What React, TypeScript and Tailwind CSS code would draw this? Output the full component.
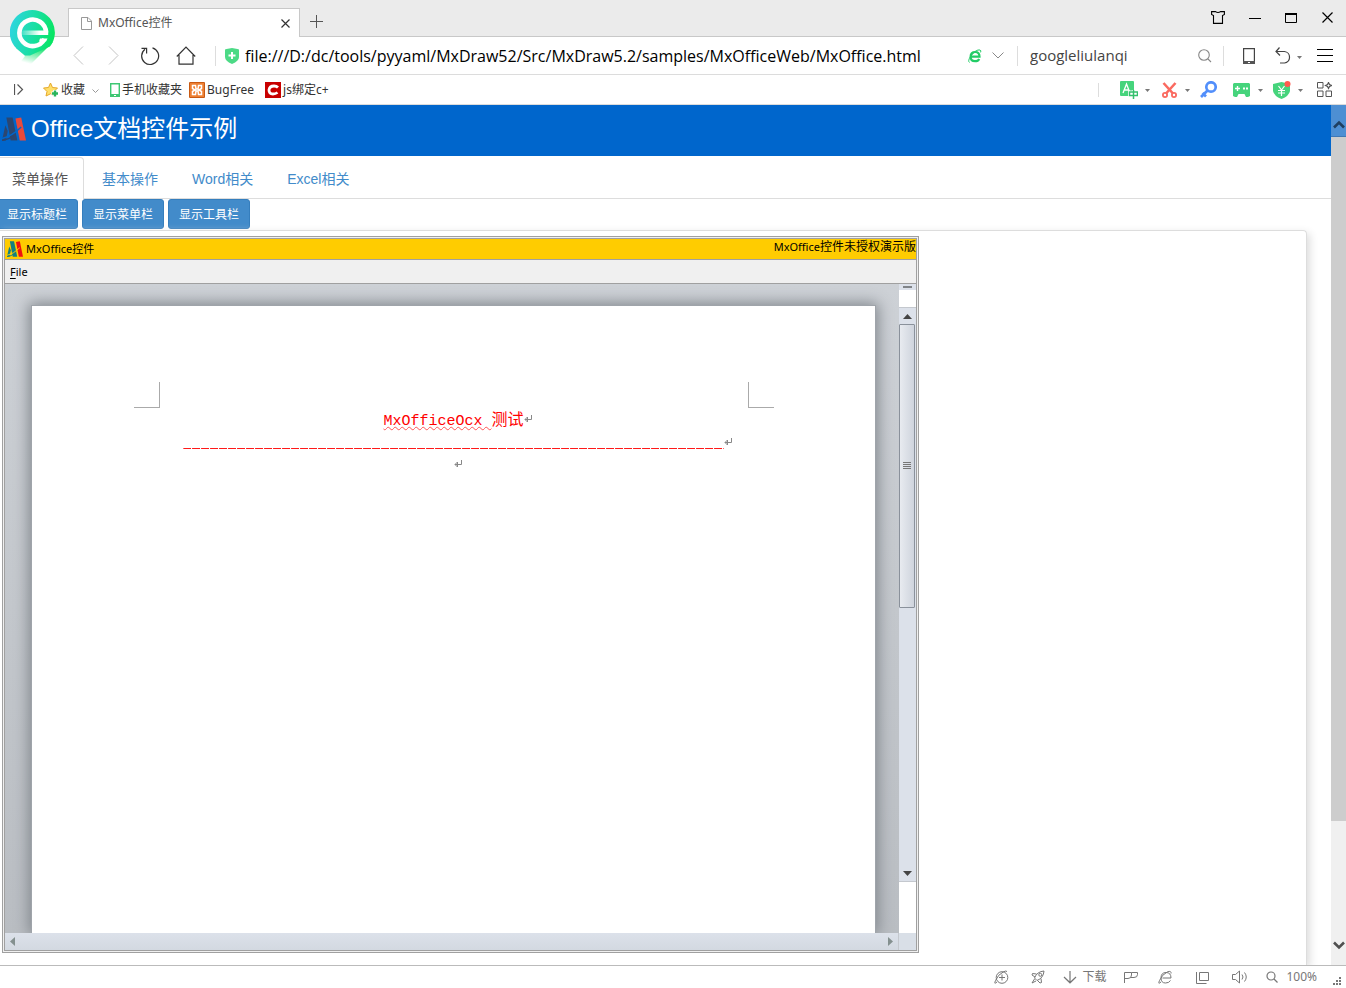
import React from "react";

const line = { fill: "none", stroke: "currentColor" } as const;

function BrowserLogo() {
  return (
    <svg className="absolute left-[10px] top-[10px] z-10" width="46" height="58" viewBox="0 0 46 58" aria-hidden="true">
      <defs>
        <linearGradient id="pin" x1="0" y1="0.4" x2="1" y2="0.6">
          <stop offset="0" stopColor="#2fd5e0" />
          <stop offset="0.55" stopColor="#18dfa0" />
          <stop offset="1" stopColor="#06e65c" />
        </linearGradient>
        <linearGradient id="tail" x1="0.7" y1="0" x2="0.25" y2="1">
          <stop offset="0.2" stopColor="#12e26c" />
          <stop offset="0.95" stopColor="#12e26c" stopOpacity="0" />
        </linearGradient>
        <linearGradient id="bar" gradientUnits="userSpaceOnUse" x1="11" y1="0" x2="37" y2="0">
          <stop offset="0" stopColor="#fff" stopOpacity="0.1" />
          <stop offset="0.7" stopColor="#fff" />
        </linearGradient>
      </defs>
      <path d="M6 38L15 46L9 54H21L43 32L24 34Z" fill="url(#tail)" />
      <path d="M22.500 0A22.500 22.500 0 0 1 40 36.500L20 45.500L15 45.500L6.500 38.500A22.500 22.500 0 0 1 22.500 0Z" fill="url(#pin)" />
      <path d="M36 22.500A13.300 13.300 0 1 0 34.500 29" fill="none" stroke="#fff" strokeWidth="4.600" />
      <path d="M11 20.500H38.200V25H11Z" fill="url(#bar)" />
      <path d="M30 28.500H37.500L36 31.500H29Z" fill="#fff" />
    </svg>
  );
}

function ProductMark({ size, left, right, ground }: { size: number; left: string; right: string; ground: string }) {
  return (
    <svg className="shrink-0" width={size} height={size} viewBox="0 0 25 24" aria-hidden="true">
      <path d="M3.500 8L6 14L4 24H0Z" fill={left} />
      <path d="M4.500 0H11L16 24H9Z" fill={left} />
      <path d="M14 1L20 0L25 24H18.500Z" fill={right} />
      <path d="M0 22Q10 20 20 10" fill="none" stroke={ground} strokeWidth="1.500" />
      <path d="M0 24Q7 23 12 19" fill="none" stroke={left} strokeWidth="1.500" />
    </svg>
  );
}

function Chevron({ w, h, d, className = "", sw = 1 }: { w: number; h: number; d: string; className?: string; sw?: number }) {
  return (
    <svg className={"block shrink-0 " + className} width={w} height={h} viewBox={`0 0 ${w} ${h}`} {...line} strokeWidth={sw} aria-hidden="true">
      <path d={d} />
    </svg>
  );
}

function Caret({ className = "" }: { className?: string }) {
  return (
    <svg className={"block shrink-0 " + className} width="5" height="3" viewBox="0 0 5 3" aria-hidden="true">
      <path d="M0 0H5L2.500 3Z" fill="#777" />
    </svg>
  );
}

function IconButton({ label, className = "", children }: { label: string; className?: string; children: React.ReactNode }) {
  return (
    <button type="button" aria-label={label} className={"block shrink-0 " + className}>
      {children}
    </button>
  );
}

function TabStrip() {
  return (
    <div className="flex h-[37px] items-end border-b border-[#c8c8c8] bg-[#ebebeb] pl-[68px]">
      <div className="-mb-px flex h-[29px] w-[232px] items-center border border-b-0 border-[#c8c8c8] bg-white pl-3 pr-[9px]">
        <svg width="11" height="13" viewBox="0 0 11 13" {...line} className="text-[#999]" aria-hidden="true">
          <path d="M.5.500H7L10.500 4V12.500H.500ZM6.500.500V4.500H10.500" />
        </svg>
        <span className="ml-[6px] flex-1 text-[12px] leading-4 text-[#555]">MxOffice控件</span>
        <IconButton label="关闭标签页" className="text-[#333]">
          <Chevron w={9} h={9} d="M.500.500L8.500 8.500M8.500.500L.500 8.500" sw={1.2} />
        </IconButton>
      </div>
      <IconButton label="新建标签页" className="mb-2 ml-[10px] text-[#555]">
        <Chevron w={13} h={13} d="M6.500 0V13M0 6.500H13" />
      </IconButton>
      <div className="mb-3 ml-auto flex items-center pr-[13px] text-black">
        <IconButton label="皮肤">
          <svg width="14" height="13" viewBox="0 0 14 13" {...line} strokeWidth="1.100" aria-hidden="true">
            <path d="M.6.600H4.500Q7 2.500 9.500.600H13.400V3.500L11.500 4.500V12.400H2.500V4.500L.6 3.500Z" />
          </svg>
        </IconButton>
        <IconButton label="最小化" className="ml-6">
          <Chevron w={12} h={12} d="M0 6.500H12" />
        </IconButton>
        <IconButton label="最大化" className="ml-6">
          <svg width="12" height="12" viewBox="0 0 12 12" aria-hidden="true">
            <path d="M.5 2H11.500V10.500H.500Z" {...line} />
            <path d="M0 1H12V3H0Z" />
          </svg>
        </IconButton>
        <IconButton label="关闭" className="ml-[25px]">
          <Chevron w={11} h={11} d="M.5.500L10.500 10.500M10.500.500L.500 10.500" sw={1.2} />
        </IconButton>
      </div>
    </div>
  );
}

function NavBar() {
  return (
    <div className="flex h-[38px] items-center border-b border-[#dcdcdc] bg-white pl-[73px] pr-[13px] text-[#444]">
      <IconButton label="后退" className="text-[#c4c4c4]">
        <Chevron w={11} h={19} d="M10 .500L1 9.500L10 18.500" />
      </IconButton>
      <IconButton label="前进" className="ml-[24px] text-[#c4c4c4]">
        <Chevron w={11} h={19} d="M1 .500L10 9.500L1 18.500" />
      </IconButton>
      <IconButton label="刷新" className="ml-[21px] text-[#333]">
        <svg width="20" height="20" viewBox="0 0 20 20" {...line} strokeWidth="1.200" aria-hidden="true">
          <path d="M12.500 1.800A8.500 8.500 0 1 1 5 3.200M1.500 2.300H6.600V7.500" />
        </svg>
      </IconButton>
      <IconButton label="主页" className="ml-4 text-[#333]">
        <svg width="20" height="19" viewBox="0 0 20 19" {...line} strokeWidth="1.200" aria-hidden="true">
          <path d="M.8 10.500L10 1.200L19.200 10.500M3 9V18.200H17V9" />
        </svg>
      </IconButton>
      <div className="ml-[19px] h-5 w-px bg-[#ddd]" />
      <svg className="ml-[9px] shrink-0" width="14" height="16" viewBox="0 0 14 16" aria-hidden="true">
        <path d="M1.500 1L7 0L12.500 1L14 1.500V9Q14 13 7 16Q0 13 0 9V1.500Z" fill="#4cda86" />
        <path d="M7 4V11M3.500 7.500H10.500" stroke="#fff" strokeWidth="2" />
      </svg>
      <input
        aria-label="地址"
        className="ml-[6px] min-w-0 flex-1 bg-transparent font-['Open_Sans',sans-serif] text-[16px] leading-5 text-black outline-none"
        defaultValue="file:///D:/dc/tools/pyyaml/MxDraw52/Src/MxDraw5.2/samples/MxOfficeWeb/MxOffice.html"
      />
      <IconButton label="浏览模式">
        <svg width="14" height="14" viewBox="0 0 14 14" {...line} aria-hidden="true">
          <path d="M2.800 7.600H11.500Q11.500 3 7.300 3Q2.600 3 2.600 7.800Q2.600 12.200 7 12.200Q10.200 12.200 11.200 10" stroke="#22cc66" strokeWidth="2.200" />
          <path d="M1.500 13.500Q-.5 12 2.500 7.500Q8 0 12 1Q13.500 1.500 12.600 3.400" stroke="#22cc66" />
        </svg>
      </IconButton>
      <IconButton label="更多模式" className="ml-[10px] text-[#888]">
        <Chevron w={12} h={7} d="M.5.500L6 6L11.500.500" />
      </IconButton>
      <div className="ml-[13px] h-5 w-px bg-[#ddd]" />
      <input
        aria-label="搜索"
        className="ml-3 w-[168px] bg-transparent pb-px font-['Open_Sans',sans-serif] text-[15px] leading-5 text-[#444] outline-none"
        defaultValue="googleliulanqi"
      />
      <IconButton label="搜索按钮" className="text-[#888]">
        <svg width="14" height="14" viewBox="0 0 14 14" {...line} strokeWidth="1.100" aria-hidden="true">
          <circle cx="6" cy="6" r="5.300" />
          <path d="M10 10L13 13" />
        </svg>
      </IconButton>
      <div className="ml-[11px] h-5 w-px bg-[#ddd]" />
      <IconButton label="手机" className="ml-[19px]">
        <svg width="12" height="16" viewBox="0 0 12 16" aria-hidden="true">
          <path d="M.6.600H11.400V15.400H.600Z" {...line} strokeWidth="1.200" />
          <path d="M0 13H12V16H0Z" fill="#555" />
          <path d="M5 14.500H7" stroke="#fff" />
        </svg>
      </IconButton>
      <IconButton label="撤销" className="ml-5">
        <svg width="17" height="17" viewBox="0 0 17 17" {...line} strokeWidth="1.200" aria-hidden="true">
          <path d="M4.500.500L1 4.500L5 8.500M1 4.500H9.500A5.800 5.800 0 0 1 9.500 16H5" />
        </svg>
      </IconButton>
      <Caret className="ml-[5px] mt-1" />
      <IconButton label="菜单" className="ml-[15px] text-black">
        <Chevron w={16} h={13} d="M0 .500H16M0 6.500H16M0 12.500H16" />
      </IconButton>
    </div>
  );
}

function BookmarkBar() {
  return (
    <div className="flex h-[30px] items-center border-b border-[#dcdcdc] bg-white pl-[14px] pr-[14px] text-[12px] leading-4 text-[#333]">
      <IconButton label="展开侧栏" className="text-[#555]">
        <Chevron w={10} h={11} d="M.500 0V11M3.500.500L8.500 5.500L3.500 10.500" sw={1.2} />
      </IconButton>
      <a href="#favorites" className="ml-[19px] flex items-center">
        <svg width="17" height="16" viewBox="0 0 17 16" aria-hidden="true">
          <path d="M7.500 1L9.500 5.500L14.500 6L11 9.500L12 14L7.500 11.800L3 14L4 9.500L.500 6L5.500 5.500Z" fill="#ffdf6a" stroke="#e5a92c" />
          <path d="M12 8V15M8.500 11.500H15.500" stroke="#fff" strokeWidth="4" />
          <path d="M12 8.500V14.500M9 11.500H15" stroke="#28b45c" strokeWidth="2.400" />
        </svg>
        <span className="ml-px">收藏</span>
      </a>
      <Chevron className="ml-[7px] mt-[2px] text-[#999]" w={7} h={4} d="M.5.500L3.500 3.500L6.500.500" />
      <a href="#mobile" className="ml-[11px] flex items-center">
        <svg width="10" height="14" viewBox="0 0 10 14" aria-hidden="true">
          <path d="M.7.700H9.300V13.300H.700Z" {...line} stroke="#3ec773" strokeWidth="1.400" />
          <path d="M1 11H9V13.500H1Z" fill="#3ec773" />
          <path d="M4 12.500H6" stroke="#fff" />
        </svg>
        <span className="ml-[2px]">手机收藏夹</span>
      </a>
      <a href="#bugfree" className="ml-[7px] flex items-center">
        <svg width="16" height="16" viewBox="0 0 16 16" aria-hidden="true">
          <rect width="16" height="16" rx="1" fill="#c85a14" />
          <rect x="1" y="1" width="14" height="14" fill="#ee8033" />
          <path d="M5 3.500H3.500V6.500L6 8L3.500 9.500V12.500H6.500L7 9H9L9.500 12.500H12.500V9.500L10 8L12.500 6.500V3.500H9.500L9 7H7L6.500 3.500Z" fill="none" stroke="#fff" strokeWidth="1.500" />
        </svg>
        <span className="ml-[2px]">BugFree</span>
      </a>
      <a href="#js" className="ml-[11px] flex items-center">
        <svg width="16" height="16" viewBox="0 0 16 16" aria-hidden="true">
          <rect width="16" height="16" fill="#c80000" />
          <path d="M13 5.500Q11.500 4 9 4Q4.500 4 4 8Q4 12 8 12Q10.500 12 12.500 10.500" fill="none" stroke="#fff" strokeWidth="2.800" />
        </svg>
        <span className="ml-[2px]">js绑定c+</span>
      </a>
      <div className="ml-auto h-[14px] w-px bg-[#ddd]" />
      <IconButton label="翻译" className="ml-[21px]">
        <svg width="18" height="18" viewBox="0 0 18 18" aria-hidden="true">
          <rect width="14" height="15" rx="1" fill="#46d47c" />
          <path d="M3 12L6.500 3L10 12M4.300 9H8.700" fill="none" stroke="#fff" strokeWidth="1.300" />
          <path d="M9.500 11H17.500V14.500H9.500ZM13.500 9V18" fill="none" stroke="#fff" strokeWidth="3" />
          <path d="M9.500 11H17.500V14.500H9.500ZM13.500 9V18" fill="#fff" stroke="#34c06c" strokeWidth="1.500" />
        </svg>
      </IconButton>
      <Caret className="ml-[7px] mt-[2px]" />
      <IconButton label="截图" className="ml-[12px]">
        <svg width="15" height="16" viewBox="0 0 15 16" {...line} aria-hidden="true">
          <path d="M1.500 1L11 11.500M13.500 1L4 11.500" stroke="#fa6a60" strokeWidth="2.600" />
          <circle cx="3" cy="13" r="2.100" stroke="#fa6a60" strokeWidth="1.800" />
          <circle cx="12" cy="13" r="2.100" stroke="#fa6a60" strokeWidth="1.800" />
        </svg>
      </IconButton>
      <Caret className="ml-[8px] mt-[2px]" />
      <IconButton label="密码" className="ml-[10px]">
        <svg width="17" height="17" viewBox="0 0 17 17" {...line} aria-hidden="true">
          <circle cx="11" cy="6" r="4.700" stroke="#528ffb" strokeWidth="2.700" />
          <path d="M7.500 9.500L1 16M2.500 12L6 15.500" stroke="#528ffb" strokeWidth="2.700" />
        </svg>
      </IconButton>
      <IconButton label="游戏" className="ml-4">
        <svg width="17" height="14" viewBox="0 0 17 14" aria-hidden="true">
          <path d="M1 0H16L17 1V13L15 14H13L11.500 11H5.500L4 14H2L0 13V1Z" fill="#46d47c" />
          <path d="M4.500 3V8M2 5.500H7" stroke="#fff" strokeWidth="1.400" />
          <path d="M10 4.500H12V6.500H10ZM13 4.500H15V6.500H13Z" fill="#fff" />
        </svg>
      </IconButton>
      <Caret className="ml-[8px] mt-[2px]" />
      <IconButton label="网银" className="ml-[10px]">
        <svg width="19" height="18" viewBox="0 0 19 18" aria-hidden="true">
          <path d="M0 3L8.500 1L17 3V10Q16 15 8.500 18Q1 15 0 10Z" fill="#46d47c" />
          <path d="M5.500 5L8.500 9L11.500 5M5 9.500H12M5 12H12M8.500 9V15" fill="none" stroke="#fff" strokeWidth="1.200" />
          <circle cx="14.500" cy="3" r="3" fill="#ff5a4e" />
        </svg>
      </IconButton>
      <Caret className="ml-[6px] mt-[2px]" />
      <IconButton label="扩展" className="ml-[14px] text-[#555]">
        <svg width="15" height="15" viewBox="0 0 15 15" {...line} aria-hidden="true">
          <path d="M.500.500H6V6H.500ZM.500 9H6V14.500H.500ZM9 9H14.500V14.500H9Z" />
          <path d="M11.500.500L12.500 2.500L14.500 3.500L12.500 4.500L11.500 6.500L10.500 4.500L8.500 3.500L10.500 2.500Z" strokeWidth="1.200" />
        </svg>
      </IconButton>
    </div>
  );
}

function ParagraphMark() {
  return (
    <svg className="absolute left-full top-[5px]" width="8" height="8" viewBox="0 0 8 8" aria-hidden="true">
      <path d="M7.500 0V4.500H1M3.500 2V7L1 4.500Z" fill="none" stroke="#888" />
    </svg>
  );
}

const lineOfDashes = "_".repeat(60);

function DocumentPage() {
  return (
    <div className="relative ml-[26px] mr-[23px] mt-[21px] flex-1 border border-b-0 border-[#9fa4aa] bg-white px-[128px] pt-[104px] text-center font-['Liberation_Mono','Noto_Sans_CJK_SC',monospace] text-[15px] leading-[22px] text-[#f00] shadow-[0_0_14px_2px_#80868c]">
      <div className="absolute left-[102px] top-[76px] h-[26px] w-[26px] border-b border-r border-[#aaa]" />
      <div className="absolute right-[101px] top-[76px] h-[26px] w-[26px] border-b border-l border-[#aaa]" />
      <p>
        <span className="relative inline-block">
          <span className="underline decoration-[#f55] decoration-wavy decoration-1 underline-offset-1">MxOfficeOcx </span>
          <span className="text-[16px]">测试</span>
          <ParagraphMark />
        </span>
      </p>
      <p>
        <span className="relative inline-block">
          <span className="[mask-image:repeating-linear-gradient(90deg,#000_0_8px,transparent_8px_9px)] [text-shadow:0_0_0_#f00]">{lineOfDashes}</span>
          <ParagraphMark />
        </span>
      </p>
      <p>
        <span className="relative inline-block h-[22px]">
          <ParagraphMark />
        </span>
      </p>
    </div>
  );
}

function Triangle({ d, w, h, fill = "#444" }: { d: string; w: number; h: number; fill?: string }) {
  return (
    <svg className="block" width={w} height={h} viewBox={`0 0 ${w} ${h}`} aria-hidden="true">
      <path d={d} fill={fill} />
    </svg>
  );
}

function OfficeControl() {
  return (
    <div className="ml-[2px] flex min-h-0 w-[917px] max-w-full flex-1 flex-col border border-[#a0a0a0] bg-[#f0f0f0] p-px font-['Noto_Sans','Noto_Sans_CJK_SC',sans-serif] text-[11px] text-black">
      <div className="flex min-h-0 flex-1 flex-col border border-[#a0a0a0]">
        <div className="flex h-[21px] items-center border-b border-[#a0a0a0] bg-[#fc0] pl-[2px]">
          <ProductMark size={16} left="#128080" right="#f01010" ground="#ffcc00" />
          <span className="ml-[3px] leading-4">MxOffice控件</span>
          <span className="mb-1 ml-auto text-[12px] leading-4">
            <span className="text-[11px]">MxOffice</span>控件未授权演示版
          </span>
        </div>
        <div className="flex h-6 items-center border-b border-[#a0a0a0] bg-[#f0f0f0] pl-[5px]">
          <button type="button" className="leading-4">
            <span className="underline underline-offset-2">F</span>ile
          </button>
        </div>
        <div className="flex min-h-0 flex-1">
          <div className="flex min-w-0 flex-1 flex-col">
            <div className="flex min-h-0 flex-1 flex-col overflow-hidden bg-linear-to-b from-[#cdd1d6] to-[#b9bdc2]">
              <DocumentPage />
            </div>
            <div className="flex h-[17px] items-center justify-between border-r border-[#c4c8ce] bg-linear-to-b from-[#dce1ea] to-[#d3d9e1] px-[5px]">
              <button type="button" aria-label="向左滚动">
                <Triangle w={5} h={9} d="M5 0V9L0 4.500Z" fill="#84908f" />
              </button>
              <button type="button" aria-label="向右滚动">
                <Triangle w={5} h={9} d="M0 0V9L5 4.500Z" fill="#84908f" />
              </button>
            </div>
          </div>
          <div className="flex w-[17px] flex-col">
            <div className="flex h-[6px] items-center justify-center bg-[#dce1ea]">
              <div className="h-[2px] w-[9px] bg-[#808488]" />
            </div>
            <div className="h-[17px] bg-white" />
            <button type="button" aria-label="向上滚动" className="flex h-[17px] items-center justify-center border-t border-[#c4c8ce] bg-[#dce1ea]">
              <Triangle w={9} h={5} d="M0 5H9L4.500 0Z" />
            </button>
            <div className="flex min-h-0 flex-1 flex-col bg-[#dce1ea]">
              <div className="mr-px flex flex-[283] flex-col items-center justify-center gap-px rounded-[1px] border border-[#8a919b] bg-linear-to-r from-[#e8ebf0] to-[#cfd4dd]">
                <div className="h-px w-[8px] bg-[#777]" />
                <div className="h-px w-[8px] bg-[#777]" />
                <div className="h-px w-[8px] bg-[#777]" />
                <div className="h-px w-[8px] bg-[#777]" />
              </div>
              <div className="flex-[258]" />
            </div>
            <button type="button" aria-label="向下滚动" className="flex h-[17px] items-center justify-center border-b border-[#c4c8ce] bg-[#dce1ea]">
              <Triangle w={9} h={5} d="M0 0H9L4.500 5Z" />
            </button>
            <div className="h-[51px] bg-white" />
            <div className="h-[17px] bg-[#d9dfe7]" />
          </div>
        </div>
      </div>
    </div>
  );
}

const otherTabs = ["基本操作", "Word相关", "Excel相关"];
const actions = ["显示标题栏", "显示菜单栏", "显示工具栏"];

function WebPage() {
  return (
    <main className="flex min-w-0 flex-1 flex-col overflow-hidden bg-white font-['Liberation_Sans','Noto_Sans_CJK_SC',sans-serif]">
      <header className="flex h-[51px] items-center gap-[5px] bg-[#06c] pb-[3px] pl-[2px]">
        <ProductMark size={24} left="#2c4670" right="#e84a3c" ground="#0066cc" />
        <h1 className="text-[24px] leading-8 text-white">Office文档控件示例</h1>
      </header>
      <nav className="flex h-[43px] border-b border-[#ddd] pt-px text-[14px] leading-5">
        <a href="#menu" className="-mb-px flex items-center rounded-tr-[4px] border-r border-t border-[#ddd] bg-white pl-3 pr-[15px] pt-px text-[#555]">
          菜单操作
        </a>
        <div className="flex items-center gap-[34px] pl-[18px] pt-[2px]">
          {otherTabs.map((t) => (
            <a key={t} href="#tab" className="text-[#428bca]">
              {t}
            </a>
          ))}
        </div>
      </nav>
      <div className="-ml-1 flex gap-1">
        {actions.map((a) => (
          <button key={a} type="button" className="h-[30px] rounded-[3px] border border-[#357ebd] bg-[#428bca] px-[10px] pt-[2px] text-[12px] leading-[18px] text-white">
            {a}
          </button>
        ))}
      </div>
      <section className="mr-6 mt-px flex min-h-0 flex-1 flex-col rounded-tr-[4px] border-r border-t border-[#ddd] pb-3 pt-[5px] shadow-[3px_3px_8px_#ddd]">
        <OfficeControl />
      </section>
    </main>
  );
}

function PageScrollbar() {
  return (
    <div className="flex w-[15px] shrink-0 flex-col bg-[#f0f0f0]">
      <button type="button" aria-label="页面向上" className="flex h-8 items-center justify-center border-b border-[#3f78b5] bg-[#4d8fd3] pt-2 text-[#1f3f60]">
        <Chevron w={12} h={9} d="M1 7.500L6 2.500L11 7.500" sw={2.6} />
      </button>
      <div className="flex-[684] bg-[#cdcdcd]" />
      <div className="flex-[109]" />
      <button type="button" aria-label="页面向下" className="flex h-[35px] items-center justify-center pb-[5px] text-[#505050]">
        <Chevron w={12} h={9} d="M1 1.500L6 6.500L11 1.500" sw={2.6} />
      </button>
    </div>
  );
}

function StatusBar() {
  return (
    <footer className="flex h-[23px] items-center justify-end border-t border-[#bbb] bg-white pr-1 text-[12px] leading-4 text-[#777]">
      <IconButton label="加速">
        <svg width="15" height="15" viewBox="0 0 15 15" {...line} aria-hidden="true">
          <circle cx="8" cy="7.500" r="5.800" />
          <path d="M8 4.500V10.500M5 7.500H11M3 12Q-.5 15 1.500 10.500Q4 4.500 9.500 1.800Q12 .500 13 1.500" />
        </svg>
      </IconButton>
      <IconButton label="清理" className="ml-[22px]">
        <svg width="14" height="14" viewBox="0 0 14 14" {...line} aria-hidden="true">
          <path d="M3.500 8Q6 1.500 13 1Q12.500 8 6 10.500ZM5.500 4L1.500 3.500L1 5L4 7M10 8.500L10.500 12.500L9 13L6.500 10.500M3.500 9L1 13L5 11" />
          <circle cx="9.300" cy="4.800" r="1.500" />
        </svg>
      </IconButton>
      <button type="button" className="ml-[18px] flex items-center">
        <svg width="14" height="14" viewBox="0 0 14 14" {...line} strokeWidth="1.200" aria-hidden="true">
          <path d="M7 1V12.500M1 7L7 12.800L13 7" />
        </svg>
        <span className="ml-[5px]">下载</span>
      </button>
      <IconButton label="旗标" className="ml-[18px]">
        <svg width="14" height="13" viewBox="0 0 14 13" {...line} aria-hidden="true">
          <path d="M.500 12V1.500H7.500V4Q7.500 7.500 4 7.500H.500M7.500 1.500H13.500V3.500Q13.500 6.500 10 6.500H6.500" />
        </svg>
      </IconButton>
      <IconButton label="内核" className="ml-5">
        <svg width="15" height="15" viewBox="0 0 15 15" {...line} aria-hidden="true">
          <path d="M4.500 8H13Q13 2.500 8 2.500Q3 2.500 3 8Q3 13 7.500 13Q11 13 12.500 10.500M3 12Q-.5 15 1.500 10.500Q4 4.500 9.500 1.800Q13.500 .500 13 3.500" />
        </svg>
      </IconButton>
      <IconButton label="窗口" className="ml-[23px]">
        <svg width="13" height="13" viewBox="0 0 13 13" {...line} aria-hidden="true">
          <path d="M3.500 1.500H12.500V9.500H3.500ZM.500 1V12.500H10.500" />
        </svg>
      </IconButton>
      <IconButton label="声音" className="ml-[23px]">
        <svg width="16" height="14" viewBox="0 0 16 14" {...line} aria-hidden="true">
          <path d="M.500 4.500H3.500L7.500 1V13L3.500 9.500H.500ZM10 4.500Q12 7 10 9.500M12.500 2.500Q16 7 12.500 11.500" />
        </svg>
      </IconButton>
      <button type="button" className="ml-[18px] flex items-center">
        <svg width="12" height="12" viewBox="0 0 12 12" {...line} strokeWidth="1.200" aria-hidden="true">
          <circle cx="5" cy="5" r="4" />
          <path d="M8 8L11.500 11.500" />
        </svg>
        <span className="ml-2">100%</span>
      </button>
      <svg className="ml-4 mt-2" width="9" height="9" viewBox="0 0 9 9" fill="#777" aria-hidden="true">
        <path d="M6 0H8V2H6ZM3 3H5V5H3ZM6 3H8V5H6ZM0 6H2V8H0ZM3 6H5V8H3ZM6 6H8V8H6Z" />
      </svg>
    </footer>
  );
}

export default function App() {
  return (
    <div className="relative flex h-screen flex-col overflow-hidden bg-white font-['Noto_Sans','Noto_Sans_CJK_SC',sans-serif]">
      <BrowserLogo />
      <TabStrip />
      <NavBar />
      <BookmarkBar />
      <div className="flex min-h-0 flex-1">
        <WebPage />
        <PageScrollbar />
      </div>
      <StatusBar />
    </div>
  );
}
